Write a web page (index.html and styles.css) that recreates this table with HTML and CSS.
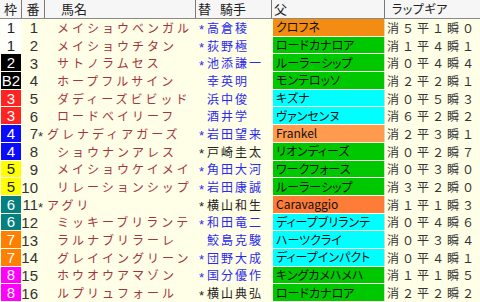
FILE: index.html
```html
<!DOCTYPE html>
<html lang="ja">
<head>
<meta charset="utf-8">
<title>ラップギア</title>
<link rel="stylesheet" href="styles.css">
</head>
<body>
<div class="board">
  <div class="head">
    <div class="h h-waku">枠</div>
    <div class="h h-ban">番</div>
    <div class="h h-name">馬名</div>
    <div class="h h-jockey"><span class="kae">替</span>騎手</div>
    <div class="h h-sire">父</div>
    <div class="h h-lap">ラップギア</div>
  </div>
  <div class="rows">
    <div class="row"><div class="waku w1"><span>1</span></div><div class="num">1</div><div class="name">メイショウベンガル</div><div class="jockey blue"><span class="mk">*</span>高倉稜</div><div class="sire orange">クロフネ</div><div class="lap">消５平１瞬０</div></div>
    <div class="row"><div class="waku w1"><span>1</span></div><div class="num">2</div><div class="name">メイショウチタン</div><div class="jockey blue"><span class="mk">*</span>荻野極</div><div class="sire green">ロードカナロア</div><div class="lap">消１平４瞬１</div></div>
    <div class="row"><div class="waku w2"><span>2</span></div><div class="num">3</div><div class="name">サトノラムセス</div><div class="jockey blue"><span class="mk">*</span>池添謙一</div><div class="sire green">ルーラーシップ</div><div class="lap">消０平４瞬４</div></div>
    <div class="row"><div class="waku w2"><span>B2</span></div><div class="num">4</div><div class="name">ホープフルサイン</div><div class="jockey blue"><span class="mk"></span>幸英明</div><div class="sire green">モンテロッソ</div><div class="lap">消２平２瞬１</div></div>
    <div class="row"><div class="waku w3"><span>3</span></div><div class="num">5</div><div class="name">ダディーズビビッド</div><div class="jockey blue"><span class="mk"></span>浜中俊</div><div class="sire cyan">キズナ</div><div class="lap">消０平５瞬３</div></div>
    <div class="row"><div class="waku w3"><span>3</span></div><div class="num">6</div><div class="name">ロードベイリーフ</div><div class="jockey blue"><span class="mk"></span>酒井学</div><div class="sire cyan">ヴァンセンヌ</div><div class="lap">消６平２瞬２</div></div>
    <div class="row"><div class="waku w4"><span>4</span></div><div class="num">7</div><div class="name"><span class="hmk">*</span>グレナディアガーズ</div><div class="jockey blue"><span class="mk">*</span>岩田望来</div><div class="sire lorange">Frankel</div><div class="lap">消２平３瞬１</div></div>
    <div class="row"><div class="waku w4"><span>4</span></div><div class="num">8</div><div class="name">ショウナンアレス</div><div class="jockey dark"><span class="mk">*</span>戸崎圭太</div><div class="sire green">リオンディーズ</div><div class="lap">消０平２瞬７</div></div>
    <div class="row"><div class="waku w5"><span>5</span></div><div class="num">9</div><div class="name">メイショウケイメイ</div><div class="jockey blue"><span class="mk">*</span>角田大河</div><div class="sire green">ワークフォース</div><div class="lap">消０平３瞬０</div></div>
    <div class="row"><div class="waku w5"><span>5</span></div><div class="num">10</div><div class="name">リレーションシップ</div><div class="jockey blue"><span class="mk">*</span>岩田康誠</div><div class="sire green">ルーラーシップ</div><div class="lap">消３平２瞬０</div></div>
    <div class="row"><div class="waku w6"><span>6</span></div><div class="num">11</div><div class="name"><span class="hmk">*</span>アグリ</div><div class="jockey dark"><span class="mk">*</span>横山和生</div><div class="sire dorange">Caravaggio</div><div class="lap">消１平１瞬３</div></div>
    <div class="row"><div class="waku w6"><span>6</span></div><div class="num">12</div><div class="name">ミッキーブリランテ</div><div class="jockey blue"><span class="mk">*</span>和田竜二</div><div class="sire cyan">ディープブリランテ</div><div class="lap">消０平４瞬６</div></div>
    <div class="row"><div class="waku w7"><span>7</span></div><div class="num">13</div><div class="name">ラルナブリラーレ</div><div class="jockey blue"><span class="mk"></span>鮫島克駿</div><div class="sire cyan">ハーツクライ</div><div class="lap">消０平３瞬４</div></div>
    <div class="row"><div class="waku w7"><span>7</span></div><div class="num">14</div><div class="name">グレイイングリーン</div><div class="jockey blue"><span class="mk">*</span>団野大成</div><div class="sire cyan">ディープインパクト</div><div class="lap">消０平４瞬１</div></div>
    <div class="row"><div class="waku w8"><span>8</span></div><div class="num">15</div><div class="name">ホウオウアマゾン</div><div class="jockey blue"><span class="mk">*</span>国分優作</div><div class="sire green">キングカメハメハ</div><div class="lap">消１平１瞬５</div></div>
    <div class="row"><div class="waku w8"><span>8</span></div><div class="num">16</div><div class="name">ルプリュフォール</div><div class="jockey dark"><span class="mk">*</span>横山典弘</div><div class="sire green">ロードカナロア</div><div class="lap">消２平２瞬２</div></div>
  </div>
</div>
</body>
</html>
```

FILE: styles.css
```css
* { box-sizing: border-box; }
html, body { margin: 0; padding: 0; }
body {
  width: 480px;
  height: 302px;
  overflow: hidden;
  background: #fffee6;
  font-family: "Noto Sans CJK JP", "Noto Sans", sans-serif;
}
.board {
  width: 480px;
  height: 302px;
  display: grid;
  grid-template-rows: 19px 283px;
}
.head {
  display: grid;
  grid-template-columns: 22px 23px 151px 76px 113px 95px;
  background: #f6f6f6;
  border-bottom: 1px solid #8a8a8a;
}
.h {
  font-size: 13px;
  line-height: 18px;
  color: #222;
  border-right: 1px solid #7a7a7a;
  white-space: nowrap;
  overflow: hidden;
}
.h-waku, .h-ban { text-align: center; }
.h-name { padding-left: 16px; }
.h-jockey { padding-left: 2px; }
.kae { margin-right: 9px; }
.h-sire { padding-left: 2px; }
.h-lap { padding-left: 7px; border-right: none; font-size: 12px; font-feature-settings: "palt"; letter-spacing: 0.5px; }

.rows {
  display: grid;
  grid-template-rows: repeat(16, minmax(0, 1fr));
  overflow: hidden;
}
.row {
  display: grid;
  grid-template-columns: 22px 16px 158px 76px 113px 95px;
  align-items: stretch;
  min-height: 0;
  line-height: 1;
  overflow: hidden;
}
.waku {
  margin: 0 1px 1px 1px;
  display: flex;
  align-items: center;
  justify-content: center;
  font-family: "Liberation Sans Narrow", "Liberation Sans", sans-serif;
  font-size: 15px;
  color: #fff;
}
.w1 { background: #ffffff; color: #222; }
.w2 { background: #000000; }
.w3 { background: #ff2424; }
.w4 { background: #0a0aff; }
.w5 { background: #ffff00; color: #222; }
.w6 { background: #058080; }
.w7 { background: #ff8000; }
.w8 { background: #ff00ff; }

.num {
  display: flex;
  align-items: center;
  justify-content: flex-end;
  font-family: "Liberation Sans Narrow", "Liberation Sans", sans-serif;
  font-size: 15px;
  color: #333;
}
.name {
  display: flex;
  align-items: center;
  padding-left: 19px;
  font-size: 12px;
  letter-spacing: 3px;
  color: #a3343c;
  white-space: nowrap;
  overflow: hidden;
}
.hmk {
  display: inline-block;
  flex: none;
  width: 9px;
  margin-left: -19px;
  padding-top: 5px;
  letter-spacing: 0;
  font-family: "Liberation Sans", sans-serif;
  font-size: 13px;
  color: #333;
}
.jockey {
  display: flex;
  align-items: center;
  padding-left: 3px;
  font-size: 12px;
  letter-spacing: 2px;
  white-space: nowrap;
  overflow: hidden;
}
.mk {
  display: inline-block;
  width: 8px;
  flex: none;
  padding-top: 4px;
  letter-spacing: 0;
  font-family: "Liberation Sans", sans-serif;
  font-size: 13px;
}
.blue { color: #2a2af2; }
.dark { color: #222; }

.sire {
  margin: 0 0 1px 1px;
  display: flex;
  align-items: center;
  padding-left: 3px;
  font-size: 12px;
  font-feature-settings: "palt";
  color: #111;
  white-space: nowrap;
  overflow: hidden;
  border-right: 1px solid #d8d8c8;
}
.orange { background: #f28c12; }
.green { background: #00c800; }
.cyan { background: #00ffff; }
.lorange { background: #ff9a4e; }
.dorange { background: #ff7b38; }

.lap {
  display: flex;
  align-items: center;
  padding-left: 2px;
  font-size: 12px;
  letter-spacing: 3px;
  color: #333;
  white-space: nowrap;
  overflow: hidden;
}
```
